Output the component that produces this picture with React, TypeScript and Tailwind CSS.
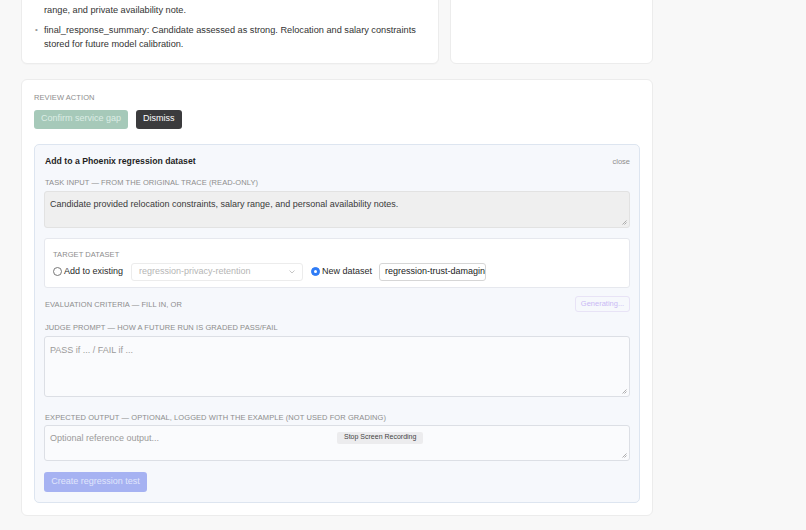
import React from "react";

const font = { fontFamily: "'Liberation Sans', Arial, sans-serif" };

function Label({ children, className = "" }: { children: React.ReactNode; className?: string }) {
  return (
    <div className={`h-[10px] text-[7.5px] leading-[12px] tracking-[0.01em] uppercase text-[#8d8d8d] ${className}`}>
      {children}
    </div>
  );
}

function Grip() {
  return (
    <svg className="absolute right-[2px] bottom-[2px]" width="6" height="6" viewBox="0 0 6 6">
      <path d="M5.5 1.5 L1.5 5.5 M5.5 3.5 L3.5 5.5" stroke="#9a9a9a" strokeWidth="0.8" />
    </svg>
  );
}

export default function App() {
  return (
    <div className="w-full h-[530px] overflow-hidden bg-[#f8f8f8] text-[#2a2a2a]" style={font}>
      <div className="pl-[21px] w-[653px]">
        {/* top cards */}
        <div className="flex gap-[11px] -mt-[9px]">
          <div className="w-[418px] bg-white border border-[#ececec] rounded-b-[6px] shadow-[0_1px_1px_rgba(0,0,0,0.02)] pl-[13px] pr-[10px] pt-[11px] pb-[11px] text-[9.2px] leading-[14.5px] text-[#333]">
            <div className="pl-[9px]">range, and private availability note.</div>
            <div className="flex mt-[5px]">
              <span className="w-[9px] shrink-0 text-[#999] text-[8px]">•</span>
              <span>
                final_response_summary: Candidate assessed as strong. Relocation and salary constraints stored for future model calibration.
              </span>
            </div>
          </div>
          <div className="flex-1 bg-white border border-[#ececec] rounded-b-[6px]" />
        </div>

        {/* review action card */}
        <div className="mt-[15px] bg-white border border-[#ececec] rounded-[6px] px-[12px] pt-[12px] pb-[12px]">
          <Label>Review action</Label>
          <div className="flex gap-[8px] mt-[8px]">
            <div className="h-[19px] px-[7px] flex items-center rounded-[3px] bg-[#a6c9b9] text-[#dcede5] text-[9px]">
              Confirm service gap
            </div>
            <div className="h-[19px] px-[7px] flex items-center rounded-[3px] bg-[#3b3b3d] text-white text-[9px]">
              Dismiss
            </div>
          </div>

          <div className="mt-[15px] bg-[#f6f8fc] border border-[#dde5f0] rounded-[5px] px-[9px] pt-[11px] pb-[10px] relative">
            <div className="flex justify-between items-center h-[12px]">
              <div className="text-[8.7px] font-bold text-[#1f1f1f] pl-[1px]">Add to a Phoenix regression dataset</div>
              <div className="text-[7.5px] text-[#8e8e8e]">close</div>
            </div>
            <Label className="mt-[9px] pl-[1px]">Task input — from the original trace (read-only)</Label>
            <div className="relative mt-[4px] h-[37px] bg-[#efefef] border border-[#e2e2e2] rounded-[3px] px-[5px] pt-[6px] text-[9px] text-[#3a3a3a]">
              Candidate provided relocation constraints, salary range, and personal availability notes.
              <Grip />
            </div>

            <div className="mt-[10px] h-[50px] bg-white border border-[#e6e8ee] rounded-[3px] px-[8px] pt-[10px]">
              <Label>Target dataset</Label>
              <div className="flex items-center mt-[4px] h-[18px] text-[9px] text-[#2a2a2a]">
                <span className="w-[9px] h-[9px] rounded-full border border-[#777] mr-[2px]" />
                <span>Add to existing</span>
                <div className="ml-[8px] w-[172px] h-[18px] border border-[#ececec] rounded-[3px] flex items-center justify-between px-[7px] text-[#b5b5b5] text-[9px]">
                  <span>regression-privacy-retention</span>
                  <svg width="6" height="4" viewBox="0 0 6 4">
                    <path d="M0.5 0.5 L3 3 L5.5 0.5" stroke="#b8b8b8" strokeWidth="0.8" fill="none" />
                  </svg>
                </div>
                <span className="ml-[8px] w-[9px] h-[9px] rounded-full bg-[#2f7cf6] border border-[#2f7cf6] flex items-center justify-center mr-[2px]">
                  <span className="w-[3px] h-[3px] rounded-full bg-white" />
                </span>
                <span>New dataset</span>
                <div className="ml-[7px] w-[107px] h-[18px] border border-[#d6d6d6] rounded-[3px] flex items-center px-[5px] overflow-hidden whitespace-nowrap text-[9px] text-[#222]">
                  regression-trust-damaging
                </div>
              </div>
            </div>

            <div className="mt-[8px] flex items-center justify-between h-[16px]">
              <Label className="pl-[1px]">Evaluation criteria — fill in, or</Label>
              <div className="h-[16px] w-[55px] flex items-center justify-center border border-[#e8e3f6] rounded-[3px] text-[7.5px] text-[#c9b9f5]">
                Generating...
              </div>
            </div>

            <Label className="mt-[10px] pl-[1px]">Judge prompt — how a future run is graded pass/fail</Label>
            <div className="relative mt-[4px] h-[61px] bg-[#fafbfd] border border-[#dcdfe5] rounded-[3px] px-[5px] pt-[7px] text-[9px] text-[#9a9a9a]">
              PASS if ... / FAIL if ...
              <Grip />
            </div>

            <Label className="mt-[15px] pl-[1px]">Expected output — optional, logged with the example (not used for grading)</Label>
            <div className="relative mt-[3px] h-[36px] bg-[#fafbfd] border border-[#dcdfe5] rounded-[3px] px-[5px] pt-[6px] text-[9px] text-[#9a9a9a]">
              Optional reference output...
              <Grip />
              <div className="absolute left-[292px] top-[6px] h-[12px] px-[7px] flex items-center rounded-[2px] bg-[#ececee] text-[7px] text-[#444]">
                Stop Screen Recording
              </div>
            </div>

            <div className="mt-[11px] h-[20px] w-[103px] flex items-center justify-center rounded-[3px] bg-[#a6b2f2] text-[#e0e5fc] text-[9px]">
              Create regression test
            </div>
          </div>
        </div>
      </div>
    </div>
  );
}
